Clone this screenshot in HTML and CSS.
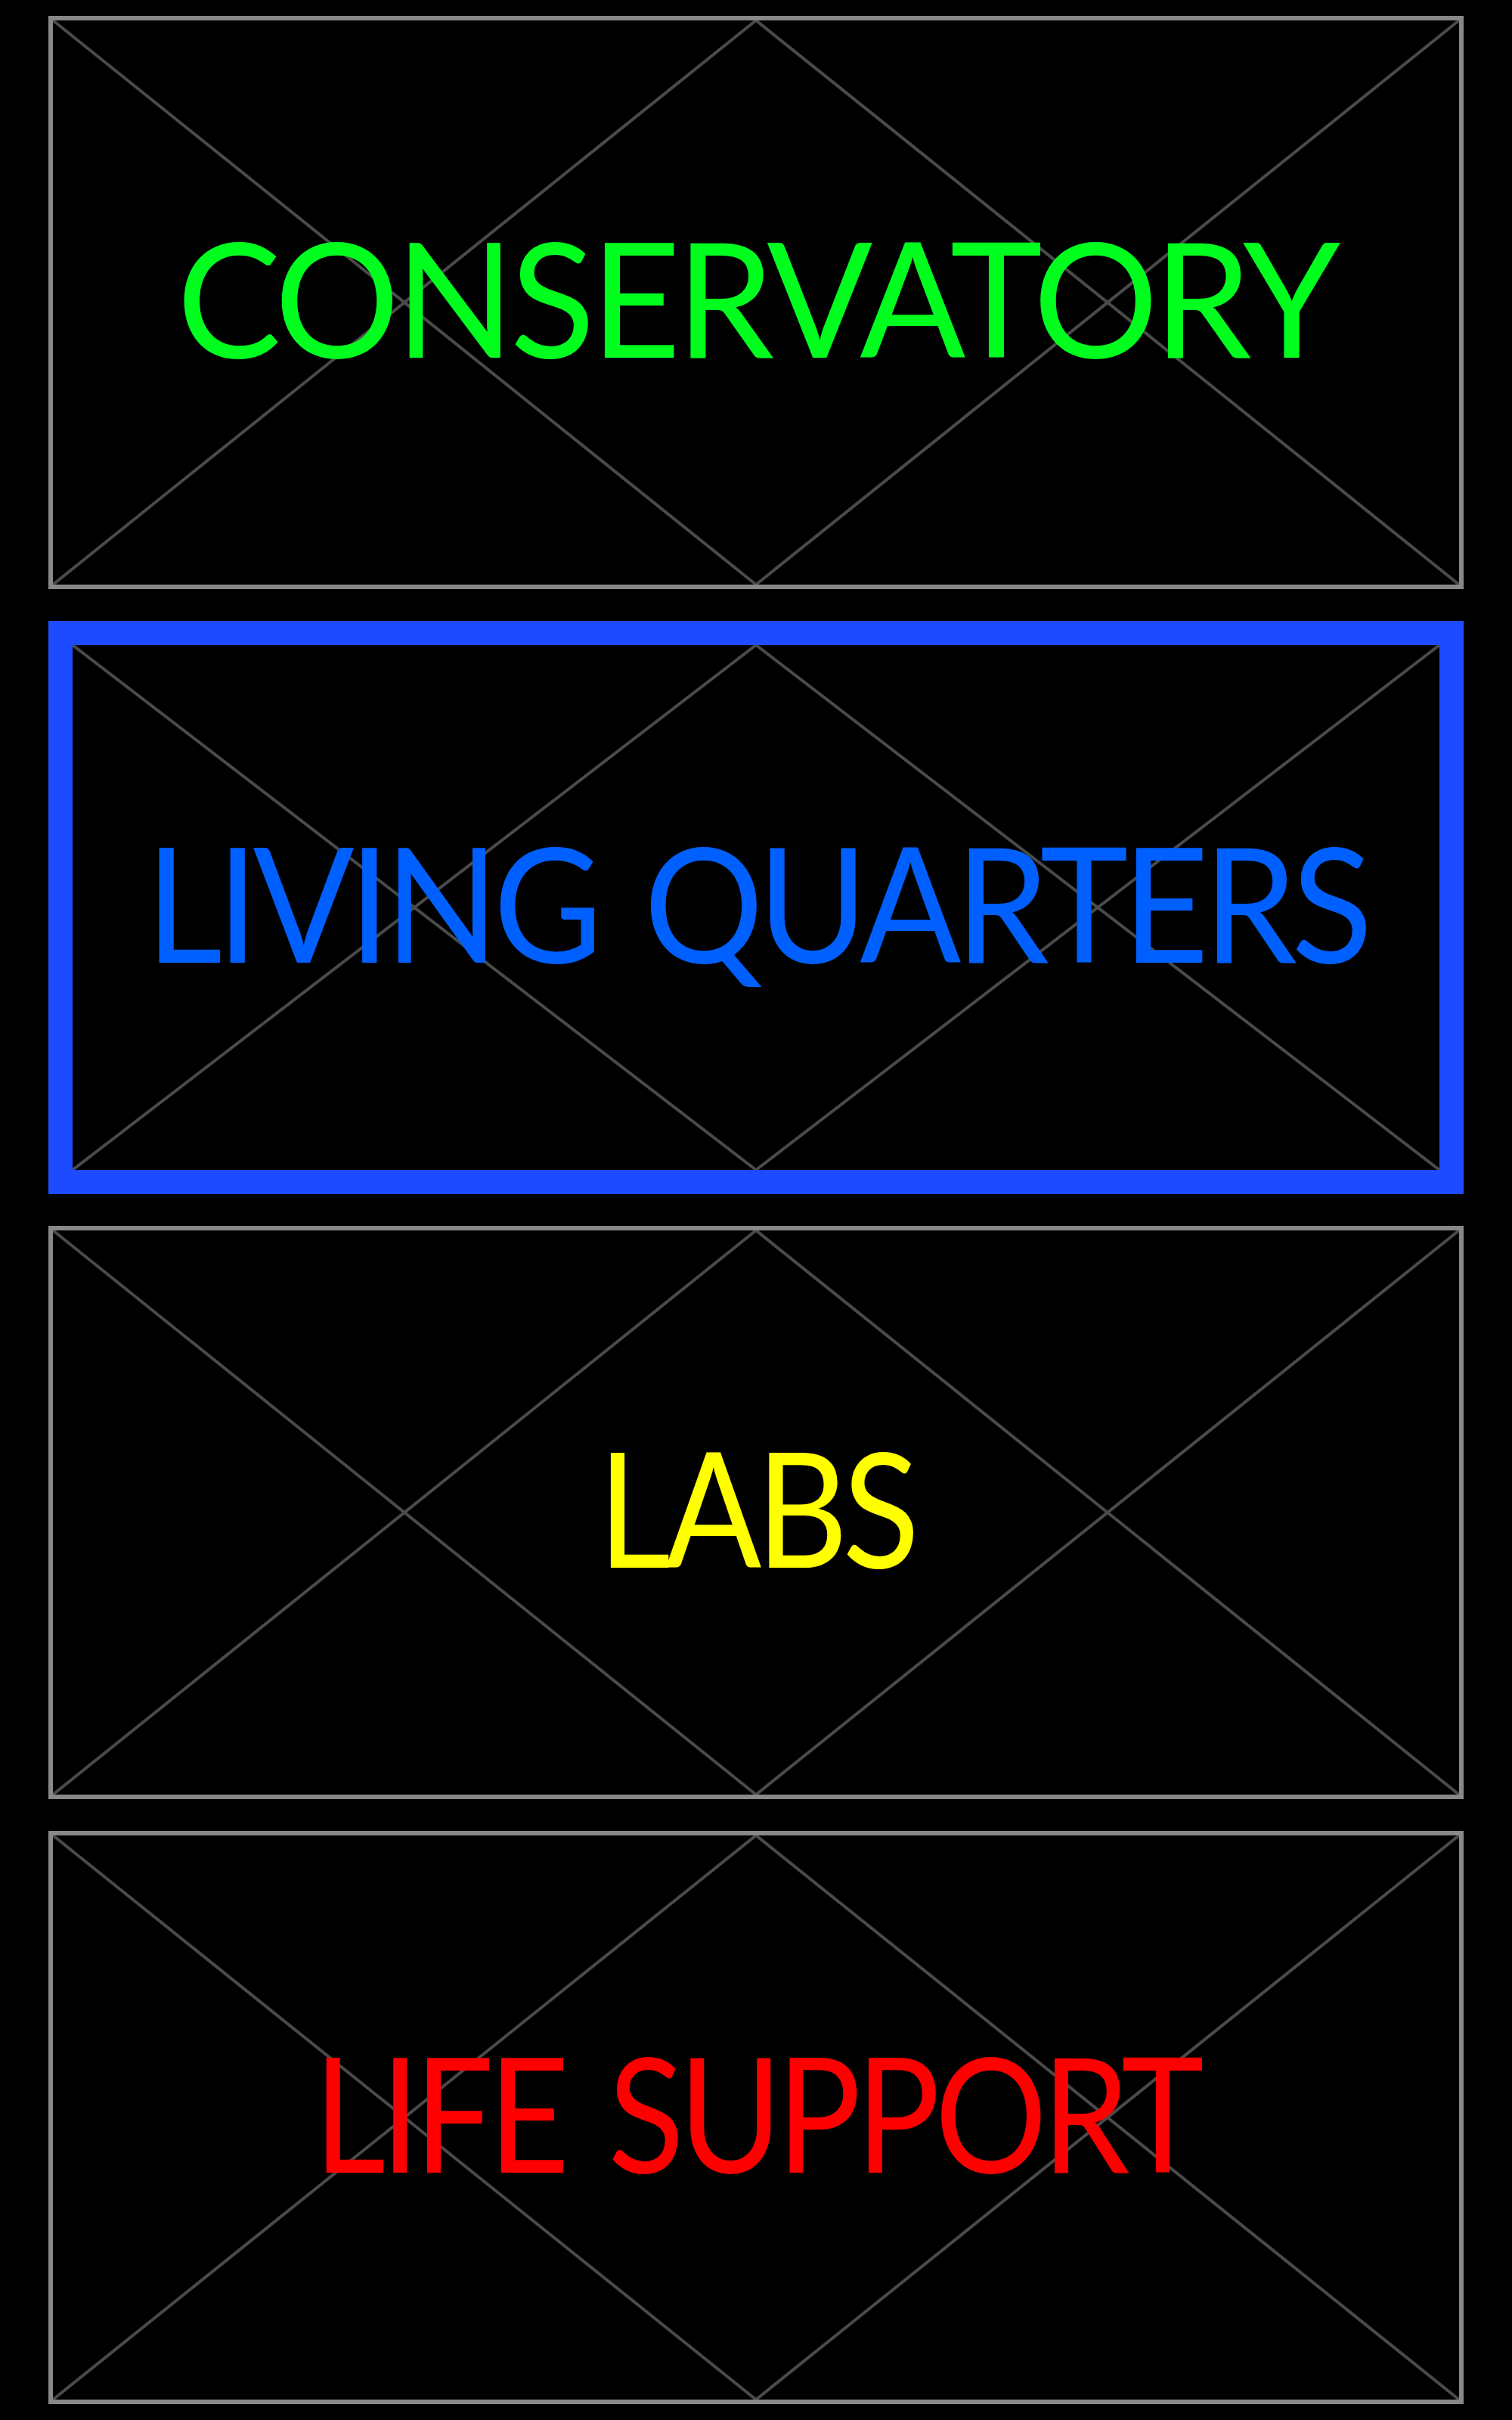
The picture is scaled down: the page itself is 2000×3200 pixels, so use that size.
FILE: index.html
```html
<!DOCTYPE html>
<html>
<head>
<meta charset="utf-8">
<link rel="stylesheet" href="styles.css">
</head>
<body>
<div class="stack">
  <div class="card">
    <svg class="cross" viewBox="0 0 100 100" preserveAspectRatio="none"><path d="M0 0L50 100M50 0L0 100M50 0L100 100M100 0L50 100"/></svg>
    <span class="label green">CONSERVATORY</span>
  </div>
  <div class="card selected">
    <svg class="cross" viewBox="0 0 100 100" preserveAspectRatio="none"><path d="M0 0L50 100M50 0L0 100M50 0L100 100M100 0L50 100"/></svg>
    <span class="label blue">LIVING QUARTERS</span>
  </div>
  <div class="card">
    <svg class="cross" viewBox="0 0 100 100" preserveAspectRatio="none"><path d="M0 0L50 100M50 0L0 100M50 0L100 100M100 0L50 100"/></svg>
    <span class="label yellow">LABS</span>
  </div>
  <div class="card">
    <svg class="cross" viewBox="0 0 100 100" preserveAspectRatio="none"><path d="M0 0L50 100M50 0L0 100M50 0L100 100M100 0L50 100"/></svg>
    <span class="label red">LIFE SUPPORT</span>
  </div>
</div>
</body>
</html>
```
FILE: styles.css
```css
html, body {
  margin: 0;
  padding: 0;
  background: #000;
}
.stack {
  display: flex;
  flex-direction: column;
  gap: 42px;
  padding: 21px 64px;
}
.card {
  position: relative;
  box-sizing: border-box;
  height: 758px;
  border: 6px solid #888888;
  display: flex;
  align-items: center;
  justify-content: center;
}
.card.selected {
  border: 32px solid #1e4bff;
}
.cross {
  position: absolute;
  left: 0;
  top: 0;
  width: 100%;
  height: 100%;
}
.cross path {
  fill: none;
  stroke: #4a4a4a;
  stroke-width: 4px;
  vector-effect: non-scaling-stroke;
}
.label {
  position: relative;
  display: inline-block;
  font-family: "Lato", "Liberation Sans", sans-serif;
  font-weight: 400;
  font-size: 211px;
  line-height: 1;
  white-space: nowrap;
  padding-bottom: 18px;
  transform-origin: center center;
}
.green { color: #00ff1e; letter-spacing: -6px; transform: scaleX(0.98); }
.blue { color: #0060ff; letter-spacing: -8px; word-spacing: 20px; transform: scaleX(0.938); }
.yellow { color: #ffff00; letter-spacing: -8px; transform: scaleX(0.89); }
.red { color: #ff0000; letter-spacing: -8px; word-spacing: 20px; transform: scaleX(0.88); }
```
